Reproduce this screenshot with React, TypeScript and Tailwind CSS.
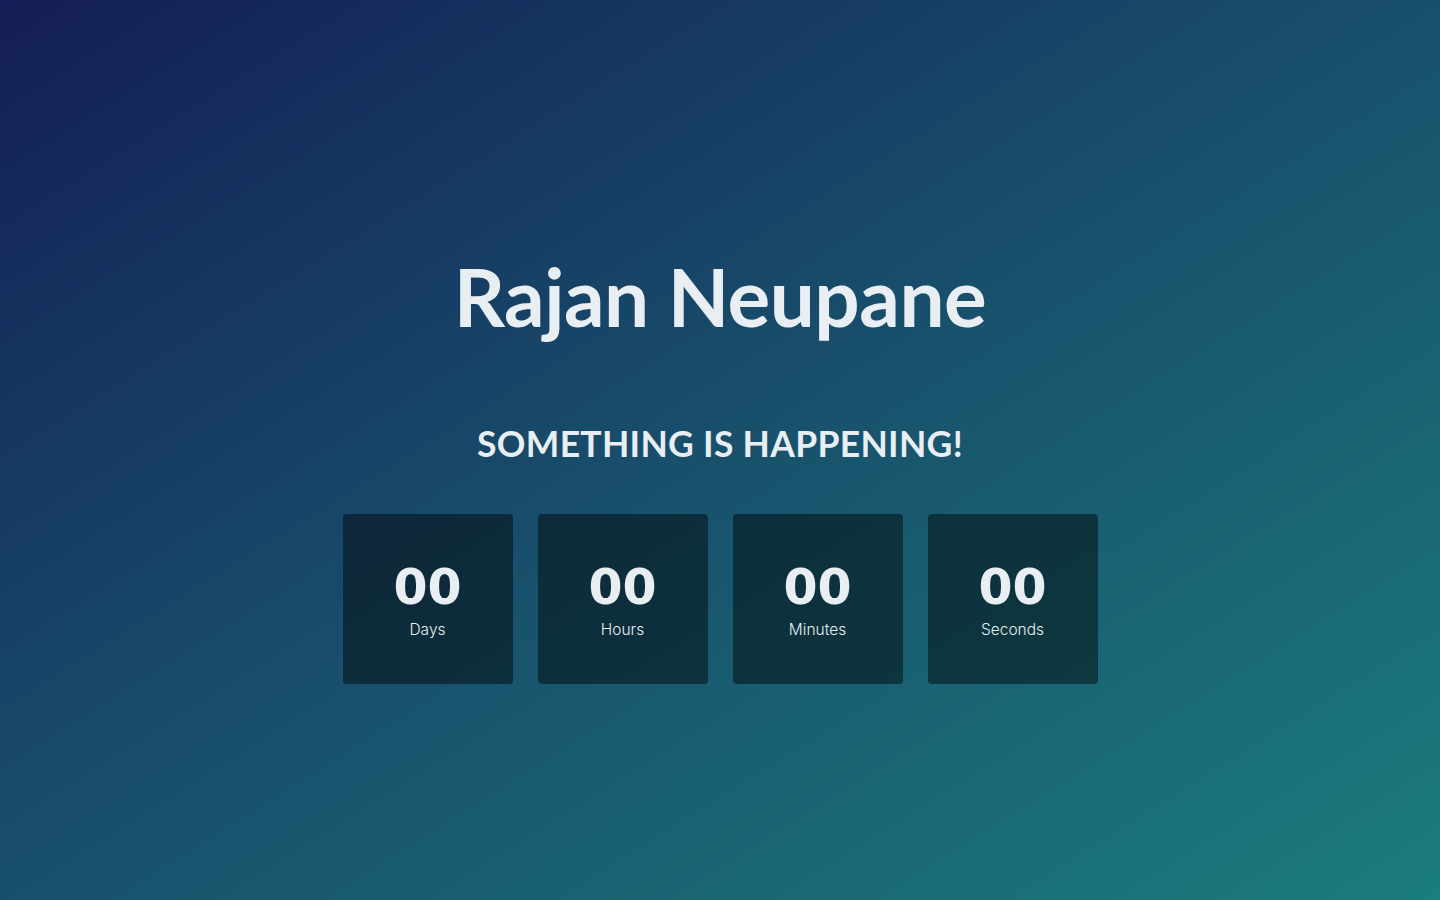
const units = ["Days", "Hours", "Minutes", "Seconds"];

export default function App() {
  return (
    <div className="h-screen w-full overflow-hidden bg-gradient-to-br from-[#141d55] via-[#18506c] to-[#1b7d7c] text-[#e8eef1] font-['Lato','Noto_Sans',sans-serif]">
      <div className="flex h-full flex-col items-center pt-[251px]">
        <h1 className="text-[80px] font-bold leading-[90px] tracking-[-0.5px]">Rajan Neupane</h1>
        <h2 className="mt-[81px] text-[35.5px] font-bold leading-[44px] tracking-[0.3px]">SOMETHING IS HAPPENING!</h2>
        <div className="mt-[48px] flex gap-[25px]">
          {units.map((u) => (
            <div
              key={u}
              className="flex h-[170px] w-[170px] flex-col items-center justify-center rounded bg-black/45 pt-[5px]"
            >
              <span className="font-['DejaVu_Sans',sans-serif] text-[49px] font-bold leading-[50px]">00</span>
              <span className="mt-[6px] font-['Inter',sans-serif] text-[15.5px] font-light leading-[22px]">{u}</span>
            </div>
          ))}
        </div>
      </div>
    </div>
  );
}
